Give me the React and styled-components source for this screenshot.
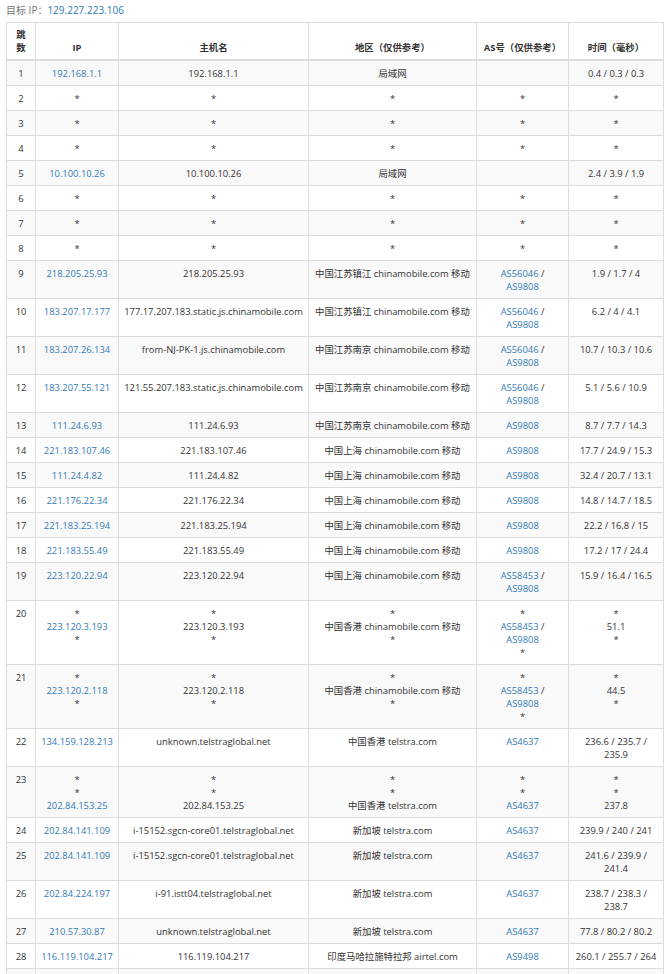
import React from 'react';
import styled, { createGlobalStyle } from 'styled-components';

const Global = createGlobalStyle`
  body {
    margin: 0;
    background: #fff;
    font-family: "Open Sans", "Noto Sans CJK SC", sans-serif;
    color: #333;
  }
`;

const Page = styled.div`
  padding: 2px 7px 0 6px;
`;

const Target = styled.div`
  font-size: 10px;
  line-height: 16px;
  color: #777;
  margin-bottom: 4px;
`;

const Link = styled.span`
  color: #337ab7;
`;

const Table = styled.table`
  width: 657px;
  border-collapse: collapse;
  table-layout: fixed;
  font-size: 9.4px;
  line-height: 13px;
`;

const Th = styled.th`
  border: 1px solid #ddd;
  border-bottom-width: 2px;
  padding: 5px 2px;
  vertical-align: bottom;
  font-weight: bold;
  text-align: center;
  color: #333;
`;

const Row = styled.tr`
  background: ${(p) => (p.$odd ? '#f9f9f9' : '#fff')};
`;

const Td = styled.td`
  border: 1px solid #ddd;
  padding: 6px 1px 5px;
  vertical-align: top;
  text-align: center;
  white-space: ${(p) => (p.$nowrap ? 'nowrap' : 'normal')};
  color: ${(p) => (p.$link ? '#337ab7' : '#333')};
`;

const S = ['*'];
const star = (n) => ({ n, ip: S, host: S, region: S, as: S, time: S });
const cm = (c) => `${c} chinamobile.com 移动`;

const rows = [
  { n: 1, ip: ['192.168.1.1'], host: ['192.168.1.1'], region: ['局域网'], as: [], time: ['0.4 / 0.3 / 0.3'] },
  star(2), star(3), star(4),
  { n: 5, ip: ['10.100.10.26'], host: ['10.100.10.26'], region: ['局域网'], as: [], time: ['2.4 / 3.9 / 1.9'] },
  star(6), star(7), star(8),
  { n: 9, ip: ['218.205.25.93'], host: ['218.205.25.93'], region: [cm('中国江苏镇江')], as: ['AS56046 /', 'AS9808'], time: ['1.9 / 1.7 / 4'] },
  { n: 10, ip: ['183.207.17.177'], host: ['177.17.207.183.static.js.chinamobile.com'], region: [cm('中国江苏镇江')], as: ['AS56046 /', 'AS9808'], time: ['6.2 / 4 / 4.1'] },
  { n: 11, ip: ['183.207.26.134'], host: ['from-NJ-PK-1.js.chinamobile.com'], region: [cm('中国江苏南京')], as: ['AS56046 /', 'AS9808'], time: ['10.7 / 10.3 / 10.6'] },
  { n: 12, ip: ['183.207.55.121'], host: ['121.55.207.183.static.js.chinamobile.com'], region: [cm('中国江苏南京')], as: ['AS56046 /', 'AS9808'], time: ['5.1 / 5.6 / 10.9'] },
  { n: 13, ip: ['111.24.6.93'], host: ['111.24.6.93'], region: [cm('中国江苏南京')], as: ['AS9808'], time: ['8.7 / 7.7 / 14.3'] },
  { n: 14, ip: ['221.183.107.46'], host: ['221.183.107.46'], region: [cm('中国上海')], as: ['AS9808'], time: ['17.7 / 24.9 / 15.3'] },
  { n: 15, ip: ['111.24.4.82'], host: ['111.24.4.82'], region: [cm('中国上海')], as: ['AS9808'], time: ['32.4 / 20.7 / 13.1'] },
  { n: 16, ip: ['221.176.22.34'], host: ['221.176.22.34'], region: [cm('中国上海')], as: ['AS9808'], time: ['14.8 / 14.7 / 18.5'] },
  { n: 17, ip: ['221.183.25.194'], host: ['221.183.25.194'], region: [cm('中国上海')], as: ['AS9808'], time: ['22.2 / 16.8 / 15'] },
  { n: 18, ip: ['221.183.55.49'], host: ['221.183.55.49'], region: [cm('中国上海')], as: ['AS9808'], time: ['17.2 / 17 / 24.4'] },
  { n: 19, ip: ['223.120.22.94'], host: ['223.120.22.94'], region: [cm('中国上海')], as: ['AS58453 /', 'AS9808'], time: ['15.9 / 16.4 / 16.5'] },
  { n: 20, ip: ['*', '223.120.3.193', '*'], host: ['*', '223.120.3.193', '*'], region: ['*', cm('中国香港'), '*'], as: ['*', 'AS58453 /', 'AS9808', '*'], time: ['*', '51.1', '*'] },
  { n: 21, ip: ['*', '223.120.2.118', '*'], host: ['*', '223.120.2.118', '*'], region: ['*', cm('中国香港'), '*'], as: ['*', 'AS58453 /', 'AS9808', '*'], time: ['*', '44.5', '*'] },
  { n: 22, ip: ['134.159.128.213'], host: ['unknown.telstraglobal.net'], region: ['中国香港 telstra.com'], as: ['AS4637'], time: ['236.6 / 235.7 /', '235.9'] },
  { n: 23, ip: ['*', '*', '202.84.153.25'], host: ['*', '*', '202.84.153.25'], region: ['*', '*', '中国香港 telstra.com'], as: ['*', '*', 'AS4637'], time: ['*', '*', '237.8'] },
  { n: 24, ip: ['202.84.141.109'], host: ['i-15152.sgcn-core01.telstraglobal.net'], region: ['新加坡 telstra.com'], as: ['AS4637'], time: ['239.9 / 240 / 241'] },
  { n: 25, ip: ['202.84.141.109'], host: ['i-15152.sgcn-core01.telstraglobal.net'], region: ['新加坡 telstra.com'], as: ['AS4637'], time: ['241.6 / 239.9 /', '241.4'] },
  { n: 26, ip: ['202.84.224.197'], host: ['i-91.istt04.telstraglobal.net'], region: ['新加坡 telstra.com'], as: ['AS4637'], time: ['238.7 / 238.3 /', '238.7'] },
  { n: 27, ip: ['210.57.30.87'], host: ['unknown.telstraglobal.net'], region: ['新加坡 telstra.com'], as: ['AS4637'], time: ['77.8 / 80.2 / 80.2'] },
  { n: 28, ip: ['116.119.104.217'], host: ['116.119.104.217'], region: ['印度马哈拉施特拉邦 airtel.com'], as: ['AS9498'], time: ['260.1 / 255.7 / 264'] },
  { n: 29, ip: ['182.79.164.215'], host: ['182.79.164.215'], region: ['印度马哈拉施特拉邦 airtel.com'], as: ['AS9498'], time: ['261 / 261 / 261.1'] },
];

const Lines = ({ items, link }) =>
  items.map((t, i) => (
    <div key={i}>{t === '*' ? <span style={{ color: '#333' }}>*</span> : link ? <Link>{t}</Link> : t}</div>
  ));

const AsLines = ({ items }) =>
  items.map((t, i) => {
    if (t === '*') return <div key={i}>*</div>;
    const slash = t.endsWith(' /');
    return (
      <div key={i}>
        <Link>{slash ? t.slice(0, -2) : t}</Link>
        {slash ? ' /' : ''}
      </div>
    );
  });

export default function App() {
  return (
    <Page>
      <Global />
      <Target>
        目标 IP：<Link>129.227.223.106</Link>
      </Target>
      <Table>
        <colgroup>
          <col style={{ width: 29 }} />
          <col style={{ width: 83 }} />
          <col style={{ width: 190 }} />
          <col style={{ width: 168 }} />
          <col style={{ width: 92 }} />
          <col style={{ width: 95 }} />
        </colgroup>
        <thead>
          <tr>
            <Th>跳<br />数</Th>
            <Th>IP</Th>
            <Th>主机名</Th>
            <Th>地区（仅供参考）</Th>
            <Th>AS号（仅供参考）</Th>
            <Th>时间（毫秒）</Th>
          </tr>
        </thead>
        <tbody>
          {rows.map((r) => (
            <Row key={r.n} $odd={r.n % 2 === 1}>
              <Td>{r.n}</Td>
              <Td $link><Lines items={r.ip} link /></Td>
              <Td $nowrap><Lines items={r.host} /></Td>
              <Td $nowrap><Lines items={r.region} /></Td>
              <Td><AsLines items={r.as} /></Td>
              <Td><Lines items={r.time} /></Td>
            </Row>
          ))}
        </tbody>
      </Table>
    </Page>
  );
}
